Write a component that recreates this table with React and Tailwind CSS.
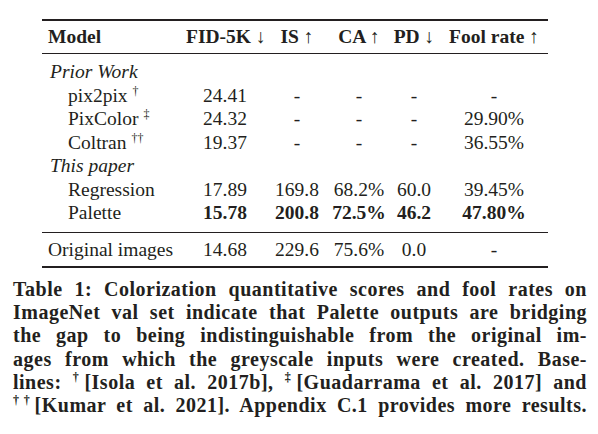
import React from 'react';

const cols = 'grid grid-cols-[144px_78px_66px_58px_52px_108px] items-center whitespace-nowrap';

const priorRows = [
    { name: 'pix2pix', mark: '†', vals: ['24.41', '-', '-', '-', '-'] },
    { name: 'PixColor', mark: '‡', vals: ['24.32', '-', '-', '-', '29.90%'] },
    { name: 'Coltran', mark: '††', vals: ['19.37', '-', '-', '-', '36.55%'] },
];

const paperRows = [
    { name: 'Regression', vals: ['17.89', '169.8', '68.2%', '60.0', '39.45%'] },
    { name: 'Palette', vals: ['15.78', '200.8', '72.5%', '46.2', '47.80%'], bold: true },
];

function Arrow({ dir }) {
    return <span className="font-normal">{dir === 'up' ? '↑' : '↓'}</span>;
}

function Row({ name, mark, vals, bold, indent }) {
    return (
        <div className={`${cols} h-[23.5px] leading-[23.5px]`}>
            <div className={indent ? 'pl-[26px]' : 'pl-[6px]'}>
                {name}
                {mark && <sup className="text-[12px] ml-[5px] -top-[7px]">{mark}</sup>}
            </div>
            {vals.map((v, i) => (
                <div key={i} className={`text-center ${bold ? 'font-bold' : ''}`}>{v}</div>
            ))}
        </div>
    );
}

export default function App() {
    return (
        <div className="w-[598px] h-[434px] bg-white text-[#231f20] [font-family:Liberation_Serif,serif] overflow-hidden">
            {/* Table */}
            <div className="ml-[42px] w-[506px] pt-[19px] text-[19.5px]">
                <div className="border-t-2 border-[#231f20]">
                    <div className={`${cols} h-[33px] font-bold border-b border-[#231f20]`}>
                        <div className="pl-[6px]">Model</div>
                        <div className="text-center">FID-5K <Arrow dir="down" /></div>
                        <div className="text-center">IS <Arrow dir="up" /></div>
                        <div className="text-center">CA <Arrow dir="up" /></div>
                        <div className="text-center">PD <Arrow dir="down" /></div>
                        <div className="text-center">Fool rate <Arrow dir="up" /></div>
                    </div>

                    <div className="pt-[6px] pb-[7px] border-b border-[#231f20]">
                        <div className="h-[23.5px] leading-[23.5px] pl-[8px] italic">Prior Work</div>
                        {priorRows.map((r) => (
                            <Row key={r.name} {...r} indent />
                        ))}
                        <div className="h-[23.5px] leading-[23.5px] pl-[8px] italic">This paper</div>
                        {paperRows.map((r) => (
                            <Row key={r.name} {...r} indent />
                        ))}
                    </div>

                    <div className="pt-[5px] pb-[5px] border-b-2 border-[#231f20]">
                        <Row name="Original images" vals={['14.68', '229.6', '75.6%', '0.0', '-']} />
                    </div>
                </div>
            </div>

            {/* Caption */}
            <div className="ml-[13px] w-[574px] mt-[10px] text-[20px] leading-[23.2px] font-bold tracking-[0.5px]">
                <div className="text-justify [text-align-last:justify]">Table 1: Colorization quantitative scores and fool rates on</div>
                <div className="text-justify [text-align-last:justify]">ImageNet val set indicate that Palette outputs are bridging</div>
                <div className="text-justify [text-align-last:justify]">the gap to being indistinguishable from the original im-</div>
                <div className="text-justify [text-align-last:justify]">ages from which the greyscale inputs were created. Base-</div>
                <div className="text-justify [text-align-last:justify]">
                    lines: <sup className="text-[12px] -top-[8px] tracking-normal">†</sup>[Isola et al. 2017b], <sup className="text-[12px] -top-[8px] tracking-normal">‡</sup>[Guadarrama et al. 2017] and
                </div>
                <div className="text-justify [text-align-last:justify]">
                    <sup className="text-[12px] -top-[8px] tracking-normal">††</sup>[Kumar et al. 2021]. Appendix C.1 provides more results.
                </div>
            </div>
        </div>
    );
}
